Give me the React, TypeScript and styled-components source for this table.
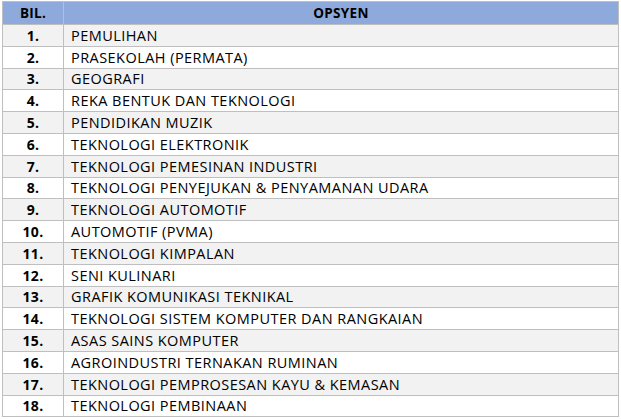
import React from "react";
import styled, { createGlobalStyle } from "styled-components";

const Global = createGlobalStyle`
  html, body { margin: 0; padding: 0; background: #ffffff; }
  body { font-family: "Open Sans", "Liberation Sans", sans-serif; }
`;

const Page = styled.div`
  padding: 1px 0 0 2px;
  width: 621px;
  box-sizing: border-box;
`;

const Table = styled.table`
  border-collapse: collapse;
  width: 617px;
  table-layout: fixed;
  font-size: 14.5px;
  letter-spacing: 0.45px;
  color: #000;
`;

const HeadCell = styled.th<{ $w?: number }>`
  background: #8ea9db;
  border: 1px solid #bfbfbf;
  height: 22px;
  padding: 0;
  font-weight: 700;
  font-size: 13.5px;
  letter-spacing: 0.3px;
  text-align: center;
  ${(p) => (p.$w ? `width: ${p.$w}px;` : "")}
`;

const Row = styled.tr<{ $shade: boolean }>`
  background: ${(p) => (p.$shade ? "#f2f2f2" : "#ffffff")};
`;

const NumCell = styled.td`
  border: 1px solid #bfbfbf;
  height: 20.8px;
  padding: 0;
  text-align: center;
  font-weight: 700;
  font-size: 14px;
  letter-spacing: 0.3px;
`;

const TextCell = styled.td`
  border: 1px solid #bfbfbf;
  padding: 0 0 0 7px;
  text-align: left;
  white-space: nowrap;
`;

const items = [
  "PEMULIHAN",
  "PRASEKOLAH (PERMATA)",
  "GEOGRAFI",
  "REKA BENTUK DAN TEKNOLOGI",
  "PENDIDIKAN MUZIK",
  "TEKNOLOGI ELEKTRONIK",
  "TEKNOLOGI PEMESINAN INDUSTRI",
  "TEKNOLOGI PENYEJUKAN & PENYAMANAN UDARA",
  "TEKNOLOGI AUTOMOTIF",
  "AUTOMOTIF (PVMA)",
  "TEKNOLOGI KIMPALAN",
  "SENI KULINARI",
  "GRAFIK KOMUNIKASI TEKNIKAL",
  "TEKNOLOGI SISTEM KOMPUTER DAN RANGKAIAN",
  "ASAS SAINS KOMPUTER",
  "AGROINDUSTRI TERNAKAN RUMINAN",
  "TEKNOLOGI PEMPROSESAN KAYU & KEMASAN",
  "TEKNOLOGI PEMBINAAN",
];

export default function App() {
  return (
    <Page>
      <Global />
      <Table>
        <thead>
          <tr>
            <HeadCell $w={60}>BIL.</HeadCell>
            <HeadCell>OPSYEN</HeadCell>
          </tr>
        </thead>
        <tbody>
          {items.map((t, i) => (
            <Row key={t} $shade={i % 2 === 0}>
              <NumCell>{i + 1}.</NumCell>
              <TextCell>{t}</TextCell>
            </Row>
          ))}
        </tbody>
      </Table>
    </Page>
  );
}
